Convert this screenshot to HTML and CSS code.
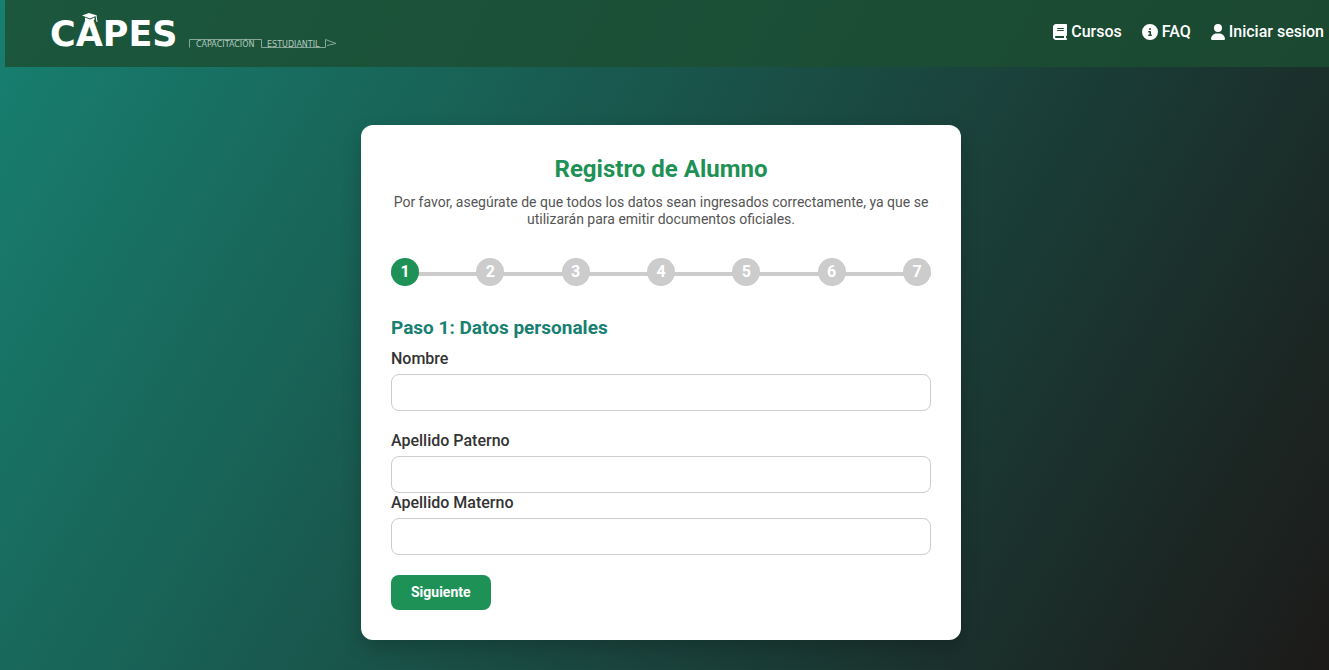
FILE: index.html
```html
<!DOCTYPE html>
<html lang="es">
	<head>
		<title>Registro de Alumno</title><meta charset="utf-8">
		<meta name="viewport" content="width=device-width, initial-scale=1">
		<link rel="stylesheet" href="styles.css">
	</head>
	<body>
		<header class="cabecera">
			<a class="logo" href="#">
				<svg width="290" height="50" viewBox="0 0 290 50">
					<text class="logo-nombre" x="0" y="36">CAPES</text>
					<!-- birrete -->
					<path fill="#fff" d="M32 5.500L39 3L47 5.500L40 8.500Z M35 7.500L40 9.500L44.500 7.500V10Q40 12 35 10Z"/>
					<path fill="none" stroke="#fff" d="M46 5.500L47 12"/>
					<!-- lapiz -->
					<path class="logo-linea" d="M139.500 37.500V29.500H211.500V37.500H275.500V29.500L286 33.500L277 35.500"/>
					<text class="logo-lema" x="146" y="37">CAPACITACIÓN</text>
					<text class="logo-lema" x="217" y="37">ESTUDIANTIL</text>
				</svg>
			</a>
			<nav class="menu">
				<a href="#"><svg width="14" height="16" viewBox="0 0 448 512"><path d="M96 0C43 0 0 43 0 96V416c0 53 43 96 96 96H416c17.700 0 32-14.300 32-32s-14.300-32-32-32V384c17.700 0 32-14.300 32-32V32c0-17.700-14.300-32-32-32H96zm0 384H352v64H96c-17.700 0-32-14.300-32-32s14.300-32 32-32zm32-240c0-8.800 7.200-16 16-16H336c8.800 0 16 7.200 16 16s-7.200 16-16 16H144c-8.800 0-16-7.200-16-16zm16 48H336c8.800 0 16 7.200 16 16s-7.200 16-16 16H144c-8.800 0-16-7.200-16-16s7.200-16 16-16z"/></svg>Cursos</a>
				<a href="#"><svg width="16" height="16" viewBox="0 0 512 512"><path d="M256 512A256 256 0 1 0 256 0a256 256 0 1 0 0 512zM216 336h24V272H216c-13.300 0-24-10.700-24-24s10.700-24 24-24h48c13.300 0 24 10.700 24 24v88h8c13.300 0 24 10.700 24 24s-10.700 24-24 24H216c-13.300 0-24-10.700-24-24s10.700-24 24-24zm40-208a32 32 0 1 1 0 64 32 32 0 1 1 0-64z"/></svg>FAQ</a>
				<a href="#"><svg width="14" height="16" viewBox="0 0 448 512"><path d="M224 256A128 128 0 1 0 224 0a128 128 0 1 0 0 256zm-45.700 48C79.800 304 0 383.800 0 482.300C0 498.700 13.300 512 29.700 512H418.300c16.400 0 29.700-13.300 29.700-29.700C448 383.800 368.200 304 269.700 304H178.300z"/></svg>Iniciar sesion</a>
			</nav>
		</header>
		<main class="contenido">
			<form class="tarjeta" action="" method="get">
				<h2>Registro de Alumno</h2>
				<p class="aviso">Por favor, asegúrate de que todos los datos sean ingresados correctamente, ya que se utilizarán para emitir documentos oficiales.</p>
				<div class="pasos">
					<span class="paso activo">1</span>
					<span class="paso">2</span>
					<span class="paso">3</span>
					<span class="paso">4</span>
					<span class="paso">5</span>
					<span class="paso">6</span>
					<span class="paso">7</span>
				</div>
				<h3>Paso 1: Datos personales</h3>
				<div class="campo separado">
					<label for="nombre">Nombre</label>
					<input type="text" id="nombre" name="nombre">
				</div>
				<div class="campo">
					<label for="paterno">Apellido Paterno</label>
					<input type="text" id="paterno" name="paterno">
				</div>
				<div class="campo separado">
					<label for="materno">Apellido Materno</label>
					<input type="text" id="materno" name="materno">
				</div>
				<button type="button" class="siguiente">Siguiente</button>
			</form>
		</main>
	</body>
</html>
```

FILE: styles.css
```css
* {box-sizing: border-box;}
body {margin: 0; min-height: 100vh; font-family: Roboto, Arial, sans-serif; color: #333; background: linear-gradient(120deg, #178070, #1c1a19);}

/* Cabecera */
.cabecera {display: flex; justify-content: space-between; align-items: flex-start; height: 67px; margin-left: 5px; padding: 10px 5px 0 45px; background-color: rgba(28, 78, 50, 0.82);}
.logo svg {display: block;}
.logo-nombre {font-family: "DejaVu Sans", sans-serif; font-size: 35px; font-weight: bold; fill: #fff;}
.logo-lema {font-family: "DejaVu Sans", sans-serif; font-size: 8px; fill: #b4c9bf;}
.logo-linea {fill: none; stroke: #86a697;}
.menu {display: flex; gap: 20px; padding-top: 12px;}
.menu a {display: flex; align-items: center; gap: 4px; color: #fff; font-size: 16px; font-weight: 500; line-height: 19px; text-decoration: none;}
.menu svg {fill: #fff;}

/* Formulario */
.contenido {padding: 58px 7px 30px 0;}
.tarjeta {max-width: 600px; margin: 0 auto; padding: 30px; background-color: #fff; border-radius: 12px; box-shadow: 0 8px 20px rgba(0, 0, 0, 0.2);}
h2 {margin: 0 0 10px; font-size: 24px; line-height: 29px; text-align: center; color: #1d9156;}
.aviso {margin: 0 0 30px; font-size: 14px; line-height: 17px; text-align: center; color: #555;}
h3 {margin: 0 0 10px; font-size: 19px; line-height: 23px; color: #178070;}

.pasos {position: relative; display: flex; justify-content: space-between; margin-bottom: 30px;}
.pasos::before {content: ""; position: absolute; top: 14px; left: 0; right: 0; height: 4px; background-color: #ccc;}
.paso {position: relative; width: 28px; height: 28px; border-radius: 50%; background-color: #ccc; color: #fff; font-weight: bold; line-height: 28px; text-align: center;}
.activo {background-color: #1d9156;}

.campo {display: flex; flex-direction: column; gap: 6px;}
.separado {margin-bottom: 20px;}
label {font-size: 16px; font-weight: 500; line-height: 19px;}
input {width: 100%; height: 37px; padding: 10px; border: 1px solid #ccc; border-radius: 8px; background-color: #fff;}
.siguiente {display: block; padding: 10px 20px; border: none; border-radius: 8px; background-color: #1d9156; color: #fff; font-family: Roboto, Arial, sans-serif; font-size: 14px; font-weight: bold; line-height: 15px; cursor: pointer;}
```
